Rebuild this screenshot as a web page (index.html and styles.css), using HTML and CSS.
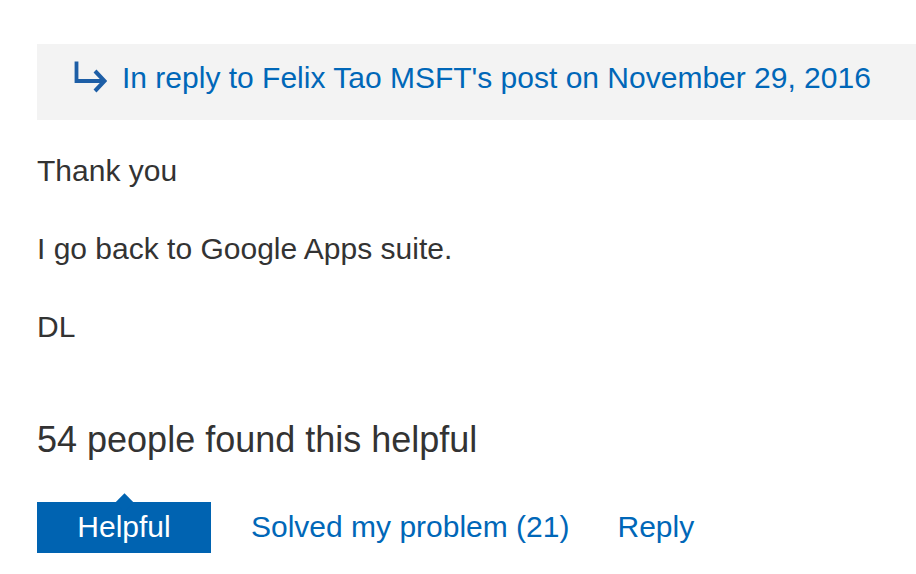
FILE: index.html
```html
<!DOCTYPE html>
<html lang="en">
<head>
<meta charset="utf-8">
<title>Reply</title>
<link rel="stylesheet" href="styles.css">
</head>
<body>
<div class="post">
  <div class="reply-to">
    <svg class="reply-icon" width="34" height="34" viewBox="0 0 34 34" aria-hidden="true">
      <path d="M3.5 1.5 V21 H30" fill="none" stroke="#1d5ea6" stroke-width="3.8"/>
      <path d="M22 11 L31.5 21 L22 31" fill="none" stroke="#1d5ea6" stroke-width="4"/>
    </svg>
    <a class="reply-link" href="#">In reply to Felix Tao MSFT's post on November 29, 2016</a>
  </div>
  <div class="body">
    <p>Thank you</p>
    <p>I go back to Google Apps suite.</p>
    <p>DL</p>
  </div>
  <h2 class="helpful-count">54 people found this helpful</h2>
  <div class="actions">
    <button class="btn-helpful" type="button">Helpful</button>
    <a class="action-link solved" href="#">Solved my problem (21)</a>
    <a class="action-link" href="#">Reply</a>
  </div>
</div>
</body>
</html>
```

FILE: styles.css
```css
html, body {
  margin: 0;
  padding: 0;
  background: #ffffff;
}

body {
  font-family: "Liberation Sans", Arial, sans-serif;
  color: #333333;
  font-size: 30px;
  line-height: 34px;
}

.post {
  padding: 44px 0 0 37px;
}

.reply-to {
  background: #f3f3f3;
  height: 76px;
  box-sizing: border-box;
  padding: 17px 0 0 36px;
  display: flex;
  align-items: flex-start;
}

.reply-icon {
  display: block;
  margin-top: -1px;
  margin-right: 15px;
  flex: none;
}

.reply-link {
  color: #0067b8;
  text-decoration: none;
  white-space: nowrap;
}

.body {
  padding-top: 34px;
}

.body p {
  margin: 0 0 44px 0;
}

.body p:last-child {
  margin-bottom: 0;
}

.helpful-count {
  margin: 75px 0 0 0;
  font-size: 36px;
  line-height: 42px;
  font-weight: normal;
  color: #333333;
}

.actions {
  margin-top: 41px;
  display: flex;
  align-items: flex-start;
}

.btn-helpful {
  position: relative;
  background: #0063b1;
  color: #ffffff;
  border: none;
  font-family: inherit;
  font-size: 30px;
  line-height: 34px;
  width: 174px;
  height: 51px;
  padding: 8px 0 9px 0;
  margin: 0 40px 0 0;
  cursor: pointer;
}

.btn-helpful::before {
  content: "";
  position: absolute;
  left: 50%;
  top: -6px;
  width: 13px;
  height: 13px;
  margin-left: -6.5px;
  background: #0063b1;
  transform: rotate(45deg);
}

.action-link {
  color: #0067b8;
  text-decoration: none;
  padding: 8px 0 9px 0;
  white-space: nowrap;
}

.action-link.solved {
  margin-right: 48px;
}
```
